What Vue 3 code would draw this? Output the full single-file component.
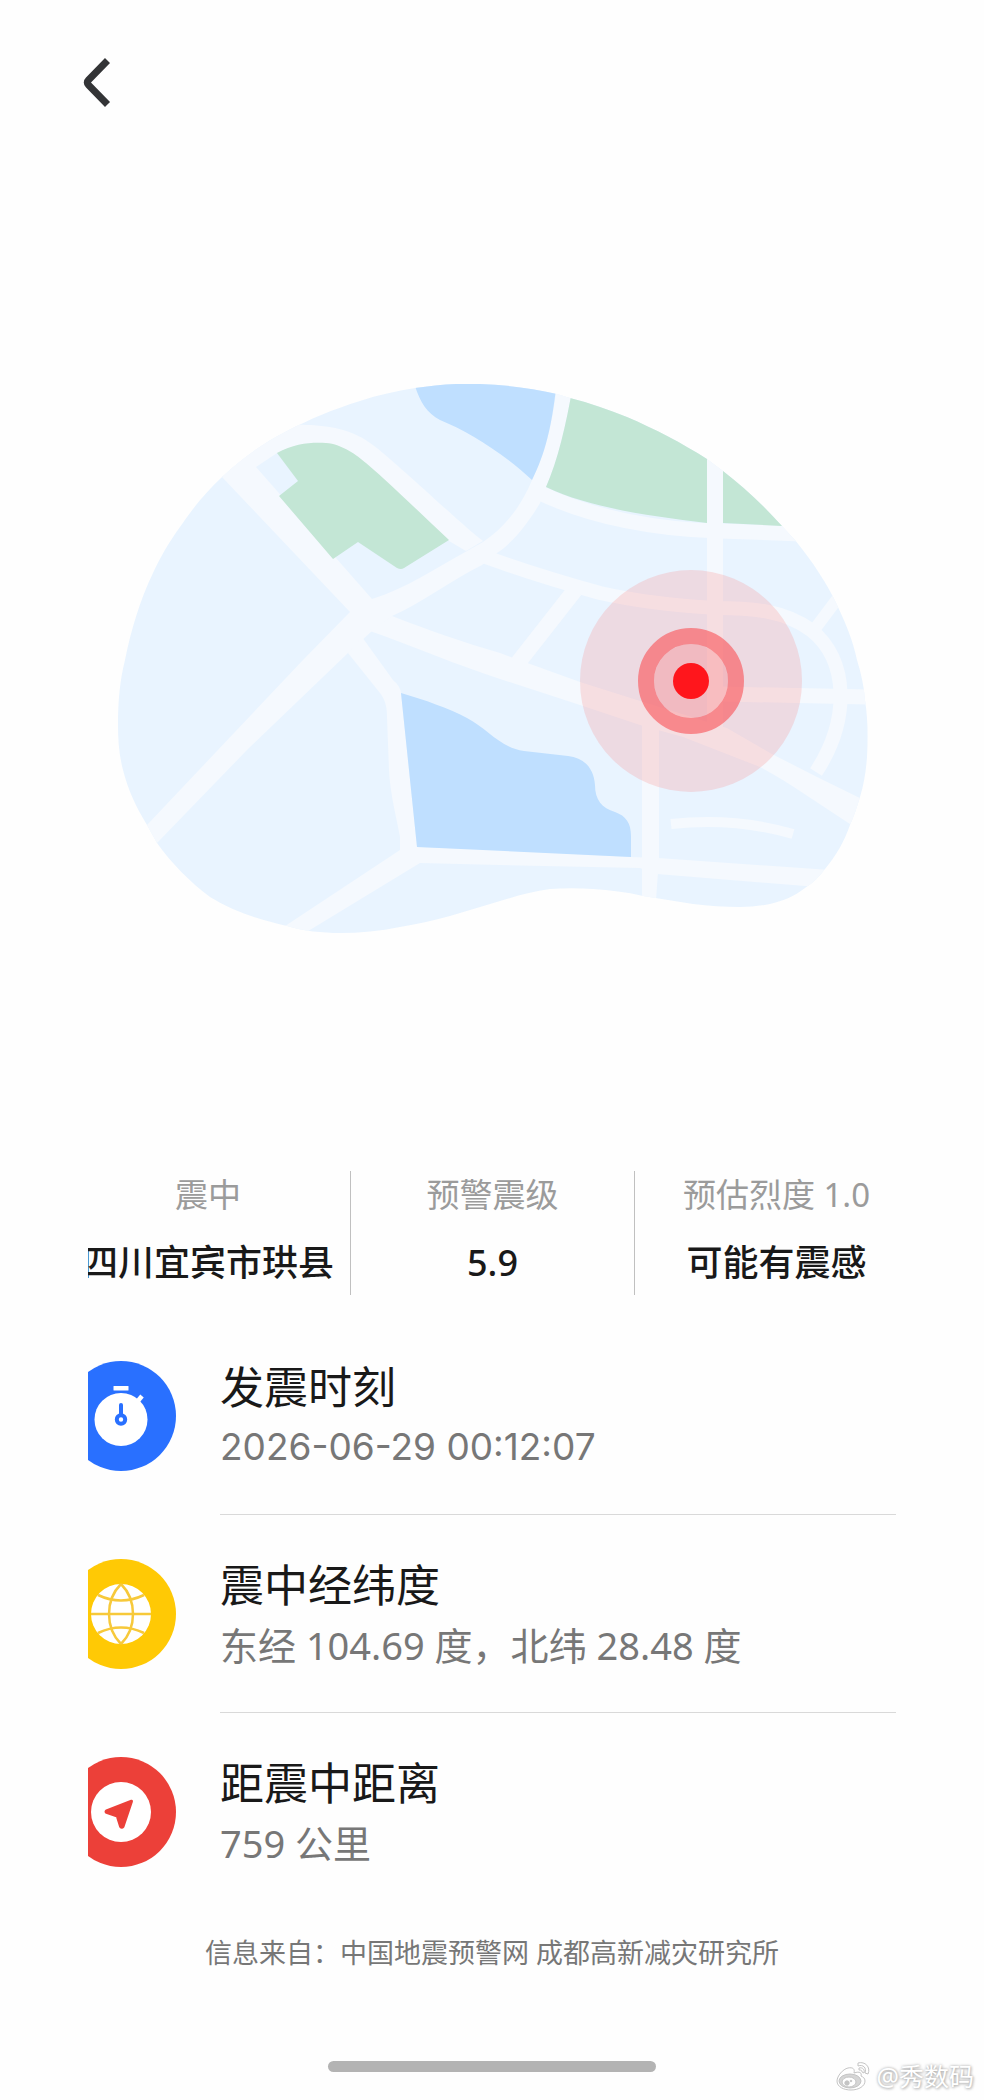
<script setup>
const stats = [
  { label: '震中', value: '四川宜宾市珙县' },
  { label: '预警震级', value: '5.9' },
  { label: '预估烈度 1.0', value: '可能有震感' },
]

const details = [
  { icon: 'clock', title: '发震时刻', text: '2026-06-29 00:12:07' },
  { icon: 'globe', title: '震中经纬度', text: '东经 104.69 度，北纬 28.48 度' },
  { icon: 'arrow', title: '距震中距离', text: '759 公里' },
]
</script>

<template>
  <main class="page">
    <header class="topbar">
      <button class="back" type="button" aria-label="返回">
        <svg viewBox="0 0 40 60" width="40" height="60" fill="none" stroke="#333436" stroke-width="7" stroke-linejoin="round">
          <path d="M31.500 8.500 L12.500 28 Q10 30.500 12.500 33 L31.500 52.500" />
        </svg>
      </button>
    </header>

    <svg class="map" viewBox="118 384 750 550" role="img" aria-label="震中位置">
      <defs>
        <clipPath id="land">
          <path d="M118 725C118 700 120 680 125 660C131 630 140 600 153 573C161 556 169 542 180 527C192 509 206 492 222 477C241 459 263 443 287 431C310 419 334 409 360 401C378 395 396 391 415 388C436 385 458 383 480 384C506 385 532 388 557 394L570 398C590 403 609 410 627 417C655 429 682 443 707 459L723 471C744 487 764 506 782 526L795 540C812 561 827 583 838 607C846 624 853 641 857 660C861 673 864 686 865 700C868 719 868 738 867 757C866 771 864 784 860 797C857 807 854 816 850 825C844 842 836 856 825 869C819 877 813 883 805 888C795 896 783 901 770 904C760 906 750 907 740 907C724 907 709 906 693 904L643 896C626 892 610 890 593 889C579 888 564 888 550 889C533 891 517 896 500 901C467 911 433 922 400 927C380 931 360 933 340 933C322 933 304 931 287 926C259 920 233 911 210 897C190 882 172 864 157 843L147 825C136 807 128 790 123 770C119 755 118 740 118 725Z" />
        </clipPath>
      </defs>
      <g clip-path="url(#land)">
        <rect x="118" y="384" width="750" height="550" fill="#e9f4ff" />
        <g fill="#f5f9fe">
          <path d="M205 459L222 477L350 612L303 660L130 843L140 860L157 843L247 750L348 653L372 631L392 616L372 599L256 467L235 440Z" />
          <path d="M222 477L280 425C310 424 345 424 370 443C385 452 465 528 483 541L466 551L449 541C430 524 370 466 350 453C330 439 305 440 277 453L256 467Z" />
          <path d="M372 599C405 589 438 567 467 551L483 542C505 527 521 507 532 480C546 452 552 425 557 385H573C566 425 558 460 546 487L540 503C530 520 515 541 497 553L482 565C450 581 420 604 392 616L370 631Z" />
          <path d="M392 616C428 630 465 643 500 653L580 682L637 700L727 728L770 753L817 777L870 803V835L850 824C820 805 790 783 760 767L683 737L640 725L580 705L500 679C457 665 415 647 370 631Z" />
          <path d="M348 653L380 693C386 701 387 708 387 717L389 770C390 793 396 815 400 837V850L270 936H300L420 863L500 865L640 868L657 874L830 888V870L658 858L631 857L500 850L417 847L401 693C400 686 396 683 393 680L362 637Z" />
          <path d="M642 720H659V858L656 900H642Z" />
        </g>
        <g fill="none" stroke="#f5f9fe">
          <path d="M475 553C520 570 560 582 600 593C640 602 680 606 715 608C755 608 785 611 811 630C849 660 850 720 816 772" stroke-width="14" />
          <path d="M536 491C590 518 660 530 720 531L802 534" stroke-width="15" />
          <path d="M715 450V728" stroke-width="16" />
          <path d="M720 694L870 697" stroke-width="15" />
          <path d="M575 590L517 664" stroke-width="16" />
          <path d="M814 630L838 598" stroke-width="12" />
          <path d="M671 824Q735 817 793 834" stroke-width="10" />
        </g>
        <g fill="#bfdfff">
          <path d="M415 386C420 402 427 413 440 420C467 431 502 452 532 480C546 452 552 425 557 380H415Z" />
          <path d="M401 693C425 700 448 708 467 718C488 729 499 747 524 751L568 756C585 758 594 769 595 785C595 800 602 808 615 812C626 816 631 823 631 836V857L417 847Z" />
        </g>
        <g fill="#c3e6d5">
          <path d="M277 453C295 443 313 442 326 443C342 444 358 456 366 463C394 487 421 514 449 540L404 568Q401 570 397 568L358 542L333 559L279 496L298 481Z" />
          <path d="M573 385C566 425 558 460 546 487C590 508 650 516 707 523V440Z" />
          <path d="M723 460V523L782 526L800 526Z" />
        </g>
      </g>
      <circle cx="691" cy="681" r="111" fill="#ff645e" fill-opacity="0.180" />
      <circle cx="691" cy="681" r="37" fill="#ff5a60" fill-opacity="0.250" />
      <circle cx="691" cy="681" r="45" fill="none" stroke="#fa5055" stroke-opacity="0.600" stroke-width="16" />
      <circle cx="691" cy="681" r="18" fill="#ff161c" />
    </svg>

    <div class="content">
      <dl class="stats">
        <div v-for="item in stats" :key="item.label" class="stat">
          <dt>{{ item.label }}</dt>
          <dd>{{ item.value }}</dd>
        </div>
      </dl>

      <ul class="details">
        <li v-for="item in details" :key="item.title" class="row">
          <svg v-if="item.icon === 'clock'" class="icon" viewBox="0 0 110 110" aria-hidden="true">
            <circle cx="55" cy="55" r="55" fill="#2970ff" />
            <circle cx="55" cy="58.500" r="26.500" fill="#fff" />
            <rect x="47.500" y="25" width="15" height="4.500" rx="0.500" fill="#fff" />
            <path d="M71 41L76 35" stroke="#fff" stroke-width="4.500" />
            <path d="M55 44V54" stroke="#2970ff" stroke-width="4" stroke-linecap="round" />
            <circle cx="55" cy="58.500" r="4.200" fill="#fff" stroke="#2970ff" stroke-width="4" />
          </svg>
          <svg v-else-if="item.icon === 'globe'" class="icon" viewBox="0 0 110 110" aria-hidden="true">
            <circle cx="55" cy="55" r="55" fill="#ffc905" />
            <circle cx="55" cy="55" r="30" fill="#fff" />
            <g fill="none" stroke="#f7c93a" stroke-width="2.500">
              <path d="M25 55H85" />
              <path d="M55 25C39 41 39 69 55 85M55 25C71 41 71 69 55 85" />
              <path d="M32 36Q55 47 78 36M32 74Q55 63 78 74" />
            </g>
          </svg>
          <svg v-else class="icon" viewBox="0 0 110 110" aria-hidden="true">
            <circle cx="55" cy="55" r="55" fill="#ec4039" />
            <circle cx="55" cy="55" r="30" fill="#fff" />
            <path d="M65.500 44.200L40.500 53.800Q39.500 54.800 40.500 55.400L51.300 59L54.600 69.600Q55.800 71 57 69.600Z" fill="#ec4039" stroke="#ec4039" stroke-width="3" stroke-linejoin="round" />
          </svg>
          <div class="text">
            <h2>{{ item.title }}</h2>
            <p :class="{ time: item.icon === 'clock' }">{{ item.text }}</p>
          </div>
        </li>
      </ul>
    </div>

    <footer>
      <p class="source">信息来自：中国地震预警网 成都高新减灾研究所</p>
      <div class="home"></div>
    </footer>

    <div class="mark">
      <svg viewBox="0 0 36 32" width="36" height="32" fill="#fff" stroke="#c4c4c4" stroke-width="1" aria-hidden="true">
        <path d="M13 8C8 9 2 16 2 21C2 27 9 30 16 30C24 30 30 26 30 21C30 18 28 17 26 16C27 13 25 11 19 13C20 9 18 7 13 8Z" />
        <ellipse cx="15" cy="21" rx="11" ry="7" fill="#d6d6d6" />
        <ellipse cx="14" cy="22" rx="7" ry="5" />
        <circle cx="12" cy="23" r="2.200" fill="#c4c4c4" />
        <circle cx="16" cy="21" r="0.800" fill="#c4c4c4" />
        <path d="M23 3C30 1 36 7 33 14L30 13C32 8 28 4 23 6ZM24 8C28 7 30 10 29 13L27 12C27 10 26 10 24 10Z" />
      </svg>
      <span>@秀数码</span>
    </div>
  </main>
</template>

<style>
body {
  background: #fefefe;
}
</style>

<style scoped>
.page {
  position: relative;
  box-sizing: border-box;
  display: flex;
  flex-direction: column;
  min-height: 100vh;
  font-family: "Noto Sans", "Noto Sans CJK SC", sans-serif;
  color: #191919;
}

.topbar {
  padding: 52px 76px 0;
}

.back {
  display: block;
  padding: 0;
  border: 0;
  background: none;
  cursor: pointer;
}

.back svg {
  display: block;
}

.map {
  display: block;
  margin: 272px 116px 0 118px;
}

.content {
  margin: 237px 88px 0;
  overflow: hidden;
}

.stats {
  display: grid;
  grid-template-columns: repeat(3, minmax(0, 1fr));
  margin: 0 -22px 22px;
}

.stat {
  display: flex;
  flex-direction: column;
  align-items: center;
  box-sizing: border-box;
  height: 124px;
  white-space: nowrap;
}

.stat + .stat {
  border-left: 1px solid #c0c0c0;
}

.stat dt {
  font-size: 33px;
  line-height: 48px;
  color: #9b9b9b;
}

.stat dd {
  margin: 20px 0 0;
  font-size: 36px;
  font-weight: 500;
  line-height: 48px;
}

.details {
  margin: 0 0 0 -22px;
  padding: 0;
  list-style: none;
}

.row {
  display: flex;
  align-items: center;
  gap: 44px;
}

.icon {
  flex: none;
  width: 110px;
  height: 110px;
}

.text {
  flex: 1;
  padding: 40px 0 37px;
  border-bottom: 1px solid #d9d9d9;
}

.row:last-child .text {
  border-bottom-color: transparent;
}

.text h2 {
  margin: 0;
  font-size: 44px;
  font-weight: 400;
  line-height: 60px;
}

.text p {
  margin: 0;
  font-size: 38px;
  line-height: 60px;
  color: #777;
}

.text .time {
  font-family: Inter, "Noto Sans CJK SC", sans-serif;
  font-size: 37px;
}

.source {
  margin: 22px 0 88px;
  font-size: 27px;
  line-height: 40px;
  text-align: center;
  color: #777;
}

.home {
  width: 33.3%;
  height: 11px;
  margin: 0 auto 27px;
  border-radius: 6px;
  background: #b3b3b3;
}

.mark {
  position: absolute;
  right: 10px;
  bottom: 6px;
  display: flex;
  align-items: center;
  gap: 6px;
  font-size: 25px;
  line-height: 36px;
  color: #fff;
  text-shadow: 0 0 3px #aaa, 1px 1px 3px #bbb;
}
</style>
